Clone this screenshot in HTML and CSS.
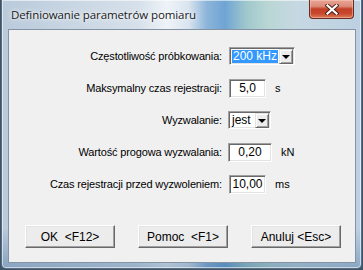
FILE: index.html
```html
<!DOCTYPE html>
<html lang="pl">
<head>
<meta charset="utf-8">
<title>Definiowanie parametrów pomiaru</title>
<link rel="stylesheet" href="styles.css">
</head>
<body>
<div class="window">
  <div class="titlebar">
    <span class="title">Definiowanie parametrów pomiaru</span>
    <div class="close">
      <svg width="14" height="11" viewBox="0 0 14 11">
        <path d="M2.5 1.5 L11.5 9.5 M11.5 1.5 L2.5 9.5" stroke="#4a2018" stroke-width="4" stroke-linecap="square" fill="none"/>
        <path d="M2.5 1.5 L11.5 9.5 M11.5 1.5 L2.5 9.5" stroke="#ffffff" stroke-width="2.2" stroke-linecap="square" fill="none"/>
      </svg>
    </div>
  </div>
  <div class="client">
    <div class="form">
      <div class="row">
        <span class="lbl">Częstotliwość próbkowania:</span>
        <div class="combo combo-wide">
          <span class="combo-val selected">200 kHz</span>
          <span class="combo-btn"><span class="tri"></span></span>
        </div>
      </div>
      <div class="row">
        <span class="lbl">Maksymalny czas rejestracji:</span>
        <div class="edit edit-s">5,0</div>
        <span class="unit">s</span>
      </div>
      <div class="row">
        <span class="lbl">Wyzwalanie:</span>
        <div class="combo combo-narrow">
          <span class="combo-val">jest</span>
          <span class="combo-btn"><span class="tri"></span></span>
        </div>
      </div>
      <div class="row">
        <span class="lbl">Wartość progowa wyzwalania:</span>
        <div class="edit edit-m">0,20</div>
        <span class="unit">kN</span>
      </div>
      <div class="row">
        <span class="lbl">Czas rejestracji przed wyzwoleniem:</span>
        <div class="edit edit-s">10,00</div>
        <span class="unit">ms</span>
      </div>
    </div>
    <div class="buttons">
      <div class="btn">OK&nbsp; &lt;F12&gt;</div>
      <div class="btn">Pomoc&nbsp; &lt;F1&gt;</div>
      <div class="btn">Anuluj &lt;Esc&gt;</div>
    </div>
  </div>
</div>
</body>
</html>
```
FILE: styles.css
```css
html, body {
  margin: 0;
  padding: 0;
}
body {
  width: 363px;
  height: 270px;
  background: #3d5468;
  overflow: hidden;
  font-family: "Liberation Sans", Arial, sans-serif;
  font-size: 11px;
  color: #000;
}
.window {
  position: relative;
  margin-left: 1px;
  width: 361px;
  height: 269px;
  box-sizing: border-box;
  border: 1px solid #5b6d80;
  border-top: 0;
  border-radius: 0 0 5px 5px;
  background:
    linear-gradient(180deg, rgba(255,255,255,0) 0%, rgba(255,255,255,0) 85%, rgba(40,90,140,0.35) 100%),
    linear-gradient(90deg, #b9cadb 0%, #c9d6e3 20%, #d6e0ea 38%, #eef3f8 46%, #d9e4ef 52%, #8db5da 57%, #6fa4d4 62%, #9fc8cc 68%, #b9d6d4 74%, #c6d8e2 82%, #bcd0e2 100%);
  box-shadow: inset 0 0 0 1px rgba(255,255,255,0.55);
  display: flex;
  flex-direction: column;
}
.titlebar {
  height: 29px;
  display: flex;
  align-items: center;
  padding-left: 9px;
  box-sizing: border-box;
}
.title {
  font-family: "Open Sans", "Noto Sans", sans-serif;
  font-size: 11.5px;
  color: #1a1a1a;
  text-shadow: 0 0 6px rgba(255,255,255,0.9), 0 0 3px rgba(255,255,255,0.9);
  margin-top: -1px;
  letter-spacing: -0.1px;
}
.close {
  position: absolute;
  left: 307px;
  top: 0;
  width: 45px;
  height: 19px;
  box-sizing: border-box;
  border: 1px solid #6a2c22;
  border-top: 0;
  border-radius: 0 0 4px 4px;
  background: linear-gradient(180deg, #e9a595 0%, #dd8a78 35%, #c23f27 50%, #c8482d 75%, #dd7a55 100%);
  box-shadow: inset 0 0 0 1px rgba(255,210,200,0.45);
  display: flex;
  align-items: center;
  justify-content: center;
}
.client {
  margin: 0 5px 0 6px;
  height: 234px;
  box-sizing: border-box;
  border: 1px solid #8393a3;
  background: #f0f0f0;
  padding-top: 10px;
}
.form {
  display: flex;
  flex-direction: column;
}
.row {
  height: 32px;
  display: flex;
  align-items: center;
}
.lbl {
  width: 213px;
  text-align: right;
  margin-right: 7px;
  white-space: nowrap;
  letter-spacing: -0.15px;
}
.unit {
  margin-left: 9px;
}
.edit {
  height: 19px;
  box-sizing: border-box;
  background: #fff;
  border-style: solid;
  border-width: 1px;
  border-color: #a0a0a0 #fff #fff #a0a0a0;
  box-shadow: inset 1px 1px 0 #696969, inset -1px -1px 0 #e3e3e3;
  text-align: center;
  line-height: 17px;
  font-size: 12px;
}
.edit-s { width: 37px; }
.edit-m { width: 44px; margin-left: -1px; }
.combo {
  height: 18px;
  box-sizing: border-box;
  background: #fff;
  border-style: solid;
  border-width: 1px;
  border-color: #a0a0a0 #fff #fff #a0a0a0;
  box-shadow: inset 1px 1px 0 #696969, inset -1px -1px 0 #e3e3e3;
  display: flex;
  padding: 2px 1px 1px 2px;
}
.combo-wide { width: 66px; }
.combo-narrow { width: 43px; margin-left: -1px; }
.combo-val {
  flex: 1;
  font-size: 12px;
  line-height: 13px;
  padding-left: 1px;
  margin-right: 1px;
}
.combo-val.selected {
  background: #3399ff;
  color: #fff;
}
.combo-btn {
  width: 14px;
  box-sizing: border-box;
  background: #ececec;
  border-style: solid;
  border-width: 1px;
  border-color: #e3e3e3 #696969 #696969 #e3e3e3;
  box-shadow: inset 1px 1px 0 #fff, inset -1px -1px 0 #a0a0a0;
  display: flex;
  align-items: center;
  justify-content: center;
  margin-top: -1px;
  margin-bottom: -1px;
}
.tri {
  width: 0;
  height: 0;
  border-left: 4px solid transparent;
  border-right: 4px solid transparent;
  border-top: 4px solid #000;
  margin-top: 1px;
}
.buttons {
  display: flex;
  gap: 23px;
  padding-left: 16px;
  margin-top: 25px;
}
.btn {
  width: 90px;
  height: 23px;
  box-sizing: border-box;
  background: #ececec;
  border-style: solid;
  border-width: 1px;
  border-color: #fff #696969 #696969 #fff;
  box-shadow: inset -1px -1px 0 #a0a0a0, inset 1px 1px 0 #e3e3e3;
  display: flex;
  align-items: center;
  justify-content: center;
  font-size: 12px;
  white-space: pre;
}
```
